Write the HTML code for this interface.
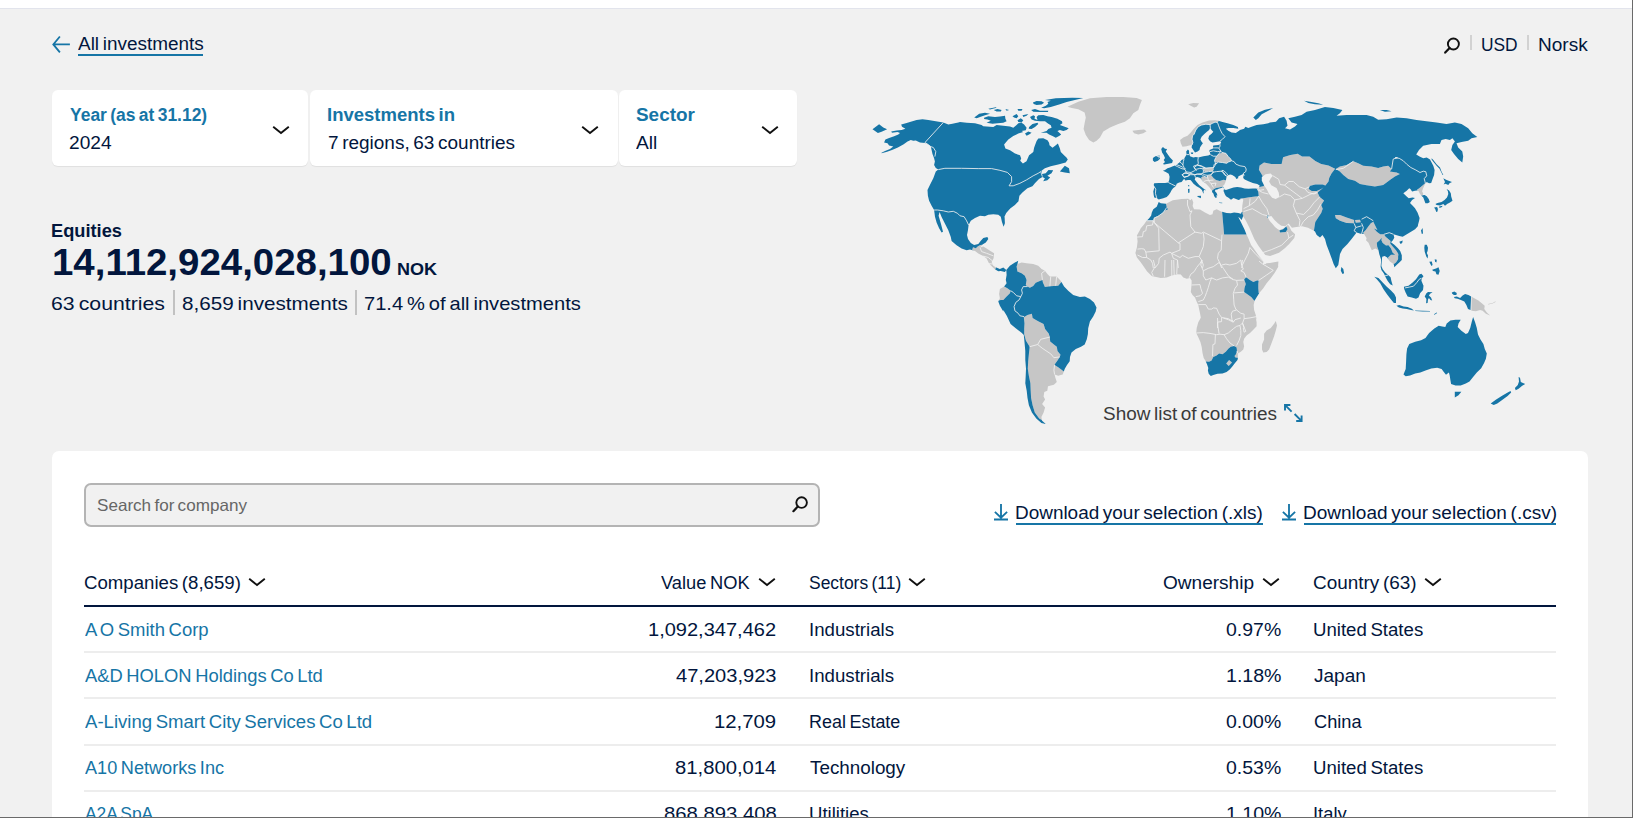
<!DOCTYPE html>
<html><head><meta charset="utf-8">
<style>
*{box-sizing:border-box;margin:0;padding:0}
html,body{width:1633px;height:818px;overflow:hidden;background:#f1f1f1;font-family:"Liberation Sans",sans-serif;color:#02163d}
.a{position:absolute;white-space:nowrap;line-height:1}
.m{position:absolute;white-space:nowrap;line-height:1;transform-origin:0 0;word-spacing:-.085em}
#topbar{position:absolute;left:0;top:0;width:1633px;height:9px;background:#fff;border-bottom:1px solid #e2e4ec}
#redge{position:absolute;left:1632px;top:0;width:1px;height:818px;background:#6a6a6a}
#bedge{position:absolute;left:0;top:817px;width:1633px;height:1px;background:#6a6a6a}
.card{position:absolute;top:90px;height:76px;background:#fff;border-radius:6px;box-shadow:0 1px 1px rgba(0,0,0,.07)}
#panel{position:absolute;left:52px;top:451px;width:1536px;height:380px;background:#fff;border-radius:7px 7px 0 0}
.rl{position:absolute;left:84px;width:1472px;height:2px;background:#ededed}
.ul{position:absolute;height:2px;background:#1675a6}
.sep{position:absolute;width:2px;background:#c4c4c4}
</style></head><body>
<div id="topbar"></div>

<!-- back arrow -->
<svg class="a" style="left:50px;top:34px" width="24" height="22" viewBox="0 0 24 22"><path d="M9.9 2.5 L3.3 10.4 L9.9 18.4 M3.5 10.4 H19.9" fill="none" stroke="#1675a6" stroke-width="1.8"/></svg>
<div class="ul" style="left:78px;top:54px;width:125px"></div>

<!-- top right: search icon + separators -->
<svg class="a" style="left:1441px;top:34px" width="24" height="24" viewBox="0 0 24 24"><circle cx="12.4" cy="10" r="5.5" fill="none" stroke="#111" stroke-width="1.9"/><path d="M8.6 14 L4.2 18.6" stroke="#111" stroke-width="2.2" stroke-linecap="round"/></svg>
<div class="sep" style="left:1470px;top:35px;height:15px;background:#d2d2d2"></div>
<div class="sep" style="left:1527px;top:35px;height:15px;background:#d2d2d2"></div>

<!-- cards -->
<div class="card" style="left:52px;width:256px"></div>
<div class="card" style="left:310px;width:307.5px"></div>
<div class="card" style="left:619px;width:178px"></div>
<svg class="a" style="left:271px;top:124px" width="20" height="12" viewBox="0 0 20 12"><path d="M2.2 2.8 L10 9 L17.8 2.8" fill="none" stroke="#111" stroke-width="1.9"/></svg>
<svg class="a" style="left:580px;top:124px" width="20" height="12" viewBox="0 0 20 12"><path d="M2.2 2.8 L10 9 L17.8 2.8" fill="none" stroke="#111" stroke-width="1.9"/></svg>
<svg class="a" style="left:760px;top:124px" width="20" height="12" viewBox="0 0 20 12"><path d="M2.2 2.8 L10 9 L17.8 2.8" fill="none" stroke="#111" stroke-width="1.9"/></svg>

<!-- stats separators -->
<div class="sep" style="left:173px;top:290px;height:24.5px;background:#c2c2c2"></div>
<div class="sep" style="left:355px;top:290px;height:24.5px;background:#c2c2c2"></div>

<svg class="a" style="left:0;top:0" width="1633" height="450" viewBox="0 0 1633 450">
<path fill-rule="evenodd" d="M1199.1,103.3 1193.2,103.0 1188.2,104.2 1190.7,105.8 1194.1,107.5 1196.6,106.7ZM1133.3,113.3 1138.3,110.0 1139.9,105.0 1141.9,100.0 1136.6,98.0 1123.3,97.0 1106.6,97.0 1090.0,98.3 1078.3,101.7 1067.5,106.7 1071.7,108.0 1078.3,109.2 1084.6,112.5 1085.8,117.5 1084.6,123.3 1083.6,129.1 1085.8,135.0 1089.1,140.0 1093.3,142.5 1096.6,140.8 1100.0,137.5 1103.3,131.6 1110.0,127.5 1118.3,124.1 1124.9,121.7 1129.9,118.3ZM1143.3,133.3 1146.6,131.3 1144.1,129.6 1138.3,130.0 1132.4,130.8 1134.1,133.3 1138.3,134.6ZM1182.5,146.7 1186.6,146.2 1189.1,145.4 1192.0,145.0 1192.9,142.5 1192.0,139.2 1192.5,135.8 1194.1,134.2 1195.8,130.0 1198.3,126.7 1201.6,125.0 1205.8,124.2 1210.0,124.6 1212.5,123.3 1215.0,122.1 1217.5,122.5 1218.7,120.9 1218.3,120.8 1215.0,120.2 1209.1,120.4 1202.5,122.5 1197.5,125.0 1193.3,129.2 1190.8,132.5 1187.5,135.8 1183.3,137.5 1180.1,140.0 1180.8,143.3ZM1218.3,162.1 1222.5,162.5 1226.6,163.3 1228.3,162.1 1231.6,160.8 1230.8,159.2 1228.3,156.7 1225.8,153.3 1222.0,152.5 1217.9,154.6 1215.0,159.2 1214.5,160.8 1215.8,162.5ZM1206.0,167.8 1203.5,168.7 1203.5,170.9 1205.4,171.9 1208.5,171.2 1212.8,170.9 1213.8,169.4 1213.5,167.8 1209.7,167.4ZM1203.8,182.2 1206.0,183.7 1209.1,186.9 1211.0,189.4 1211.9,190.6 1211.9,190.7 1213.5,189.4 1216.0,188.1 1219.1,187.5 1222.5,186.7 1223.1,186.7 1222.2,186.2 1224.1,185.0 1225.3,182.5 1225.9,180.3 1223.5,179.7 1219.7,180.9 1216.0,180.0 1213.5,178.1 1211.0,175.0 1207.2,175.6 1206.6,177.2 1202.2,176.6 1201.2,177.8 1201.7,179.9 1203.5,181.7ZM990.8,251.3 986.6,248.6 983.3,246.6 980.0,247.5 982.4,244.7 980.3,245.0 978.0,246.3 975.8,248.3 973.0,247.3 972.1,250.2 975.0,251.1 978.3,253.6 983.3,256.1 986.6,258.6 989.1,263.6 992.4,267.0 995.1,269.5 996.1,267.4 993.3,265.8 991.6,262.0 993.6,258.3 994.1,253.3ZM1058.2,285.8 1061.4,281.9 1060.7,280.8 1056.6,276.6 1049.9,276.6 1047.4,274.1 1044.9,270.8 1041.6,269.1 1038.2,265.8 1033.2,264.1 1026.6,263.3 1021.6,262.5 1017.4,264.1 1017.6,263.5 1016.6,266.6 1017.4,271.6 1021.6,273.3 1024.9,275.8 1026.6,279.9 1025.8,284.9 1027.4,286.6 1029.9,287.8 1033.2,286.1 1035.7,282.8 1039.9,281.1 1042.4,279.9 1042.9,282.4 1044.9,286.9 1049.9,286.3ZM1199.1,309.1 1200.0,313.3 1200.8,317.5 1200.1,319.1 1198.3,322.2 1196.7,328.0 1196.2,333.0 1198.3,337.2 1200.4,342.1 1201.7,347.1 1202.5,353.0 1203.7,358.0 1205.8,361.3 1205.8,361.4 1209.1,361.7 1211.6,360.5 1213.3,357.1 1216.6,355.5 1219.1,353.4 1222.5,354.2 1225.8,351.7 1228.3,348.8 1230.8,346.7 1234.1,345.9 1236.6,347.6 1237.0,350.9 1235.8,354.6 1234.5,355.9 1235.4,357.6 1237.6,357.8 1237.6,357.8 1237.9,357.8 1237.9,353.4 1240.8,351.7 1243.3,349.6 1244.1,346.3 1243.3,342.1 1244.1,338.8 1246.6,335.5 1250.0,333.0 1253.3,329.7 1256.6,326.3 1256.6,322.2 1255.8,318.0 1256.6,320.0 1255.8,315.0 1254.1,310.0 1253.7,305.0 1254.5,300.9 1251.2,297.1 1247.0,294.1 1244.1,292.1 1244.5,287.9 1245.8,284.1 1244.9,281.6 1244.1,279.6 1246.2,277.3 1249.1,279.6 1253.3,282.1 1257.0,280.4 1258.7,280.4 1258.3,284.1 1258.3,288.3 1258.7,292.9 1259.3,293.0 1263.3,288.3 1266.6,283.3 1270.8,278.3 1274.9,272.5 1278.3,266.7 1278.1,266.3 1278.4,261.6 1272.5,262.6 1266.7,263.3 1262.8,264.6 1263.6,261.6 1259.4,256.6 1255.3,250.8 1251.1,245.0 1248.6,239.1 1246.5,234.6 1224.1,234.6 1222.1,211.8 1221.6,211.7 1216.6,209.2 1213.3,210.8 1212.5,214.2 1210.0,215.0 1205.0,212.5 1200.0,209.6 1194.1,209.2 1192.6,206.1 1193.3,202.5 1191.9,198.8 1190.4,200.3 1188.2,198.8 1181.6,199.1 1172.8,200.3 1166.0,203.7 1166.8,207.5 1168.1,209.2 1165.0,210.6 1162.9,212.7 1160.0,215.2 1156.7,216.4 1154.2,218.1 1152.7,220.6 1146.5,220.8 1144.2,224.2 1140.8,228.3 1139.8,230.3 1136.9,235.5 1137.6,241.3 1136.9,247.2 1135.4,253.1 1136.9,257.5 1140.5,261.9 1143.5,266.3 1147.1,271.4 1151.5,275.8 1152.2,276.2 1155.0,276.7 1160.8,277.9 1166.7,277.5 1171.7,275.4 1177.5,274.2 1180.8,274.6 1183.3,277.5 1186.7,278.7 1190.0,277.9 1191.6,280.4 1191.6,284.1 1191.2,288.3 1190.8,292.1 1192.5,295.0 1195.0,297.5 1196.6,301.6 1198.3,305.0ZM1004.1,286.6 999.9,289.1 999.1,294.1 999.9,298.3 998.8,300.6 1000.8,299.9 1003.3,299.9 1006.6,296.6 1009.9,293.3 1010.8,290.8 1007.4,288.3ZM1041.4,417.1 1043.6,412.6 1045.1,407.5 1042.1,403.9 1045.1,399.5 1043.6,396.5 1044.3,392.1 1047.3,390.7 1048.0,386.3 1053.9,384.8 1056.8,381.9 1055.3,377.5 1054.6,374.5 1058.2,375.7 1062.7,374.5 1063.8,371.6 1061.9,370.1 1058.2,367.2 1054.6,365.0 1055.3,363.5 1057.5,360.6 1059.7,356.9 1060.5,354.7 1057.5,351.1 1056.8,346.7 1053.9,344.5 1050.2,341.5 1049.8,337.1 1048.7,333.5 1045.1,329.1 1043.6,323.9 1037.7,321.0 1032.6,318.1 1031.9,313.7 1027.5,315.1 1023.8,317.3 1024.5,323.2 1024.2,329.1 1024.2,334.2 1026.0,340.8 1029.7,346.7 1028.9,354.0 1028.2,361.3 1027.8,368.7 1028.9,376.0 1030.4,383.3 1030.7,390.7 1031.1,398.0 1032.6,405.3 1034.8,412.6 1039.2,418.5 1042.0,420.2ZM1359.9,184.1 1366.6,185.3 1374.9,186.6 1383.2,184.9 1386.6,182.4 1389.9,179.9 1394.9,176.6 1399.9,174.1 1396.6,172.4 1389.9,171.6 1391.6,169.1 1388.2,165.8 1383.2,166.6 1378.2,167.9 1371.6,166.6 1363.2,165.8 1358.2,163.3 1353.3,161.3 1346.6,164.9 1339.9,166.6 1335.8,169.1 1339.9,171.6 1343.3,174.9 1348.3,179.1 1354.9,180.8ZM1422.5,185.4 1419.2,188.3 1416.7,190.0 1418.7,191.2 1419.6,193.3 1421.2,195.4 1421.4,195.6 1422.7,195.6 1422.7,195.3 1422.5,195.4 1423.3,193.7 1422.1,191.2 1422.9,188.7 1424.2,185.8 1425.4,183.3 1425.6,183.2 1425.4,182.9ZM1335.1,168.8 1328.5,165.4 1321.2,163.9 1315.3,161.0 1309.5,156.6 1302.1,156.6 1297.7,153.7 1290.4,155.1 1283.1,157.3 1281.6,163.9 1271.3,163.9 1264.0,162.5 1259.6,165.4 1258.9,169.8 1262.5,175.7 1262.6,176.4 1265.5,174.2 1270.6,173.5 1272.8,175.7 1270.6,178.6 1269.1,181.5 1271.3,185.2 1276.5,188.1 1278.7,192.5 1279.4,196.9 1275.7,199.1 1272.1,197.7 1269.1,194.0 1266.9,189.6 1264.0,185.2 1263.8,184.9 1264.0,185.9 1259.6,187.0 1259.3,186.8 1259.1,187.5 1256.6,188.4 1256.3,188.4 1257.4,189.6 1258.4,192.5 1258.7,196.2 1255.2,196.6 1249.3,197.2 1243.5,198.2 1240.5,198.4 1240.2,199.2 1242.2,198.4 1243.2,199.4 1243.2,199.9 1242.3,205.7 1242.0,211.6 1241.8,212.1 1242.6,212.1 1242.5,213.7 1243.3,215.8 1243.1,216.2 1245.9,220.8 1249.3,227.5 1251.8,233.3 1254.3,239.1 1258.4,245.8 1262.6,251.6 1265.3,255.0 1270.2,255.9 1279.0,252.7 1284.8,248.2 1289.2,243.9 1294.3,238.0 1295.1,234.3 1291.4,230.7 1289.2,226.3 1287.8,224.8 1286.3,226.3 1283.1,228.8 1279.4,229.9 1277.5,228.9 1275.0,227.0 1272.5,224.1 1269.6,220.7 1268.1,218.0 1267.1,217.5 1267.2,215.4 1269.3,216.0 1269.2,216.1 1271.3,216.0 1274.5,220.1 1277.9,223.3 1281.3,225.7 1285.3,226.3 1288.6,223.6 1291.9,227.7 1296.3,227.0 1302.1,226.3 1308.0,227.7 1313.9,230.7 1314.6,226.3 1315.3,221.9 1318.2,217.5 1321.2,213.1 1322.7,208.7 1321.2,205.0 1324.1,200.6 1319.7,196.9 1317.5,192.5 1321.2,189.6 1323.6,187.2 1321.2,188.9 1316.8,191.1 1311.7,191.1 1308.7,188.9 1309.5,185.9 1315.3,184.5 1322.7,184.5 1325.3,185.4 1325.6,185.2 1328.5,181.5 1329.2,177.9 1331.5,173.5ZM1287.5,229.2 1285.7,232.1 1280.1,232.4 1279.4,230.4 1283.1,229.2 1286.3,226.6ZM1354.1,220.0 1346.6,217.5 1340.0,215.0 1335.0,215.0 1335.8,218.3 1340.0,220.8 1346.6,223.0 1354.1,223.3ZM1355.8,222.8 1360.8,222.2 1360.0,219.7 1355.0,220.0ZM1391.0,248.5 1392.7,252.7 1395.2,254.7 1398.5,255.6 1398.1,253.5 1396.0,250.2 1392.7,246.4 1390.2,243.5 1390.6,241.0 1387.7,238.5 1385.6,236.8 1383.9,234.3 1380.2,234.3 1376.8,231.8 1373.9,228.5 1377.4,230.0 1374.9,225.0 1373.3,221.7 1370.8,223.3 1368.3,226.6 1365.8,230.0 1363.3,232.5 1363.6,234.1 1364.1,234.1 1366.6,238.3 1366.0,240.2 1368.5,242.7 1370.2,246.8 1371.8,250.2 1375.2,248.5 1378.5,250.2 1377.2,246.8 1376.8,242.7 1379.7,240.2 1381.8,237.7 1381.4,240.2 1382.7,243.1 1386.0,245.6 1388.5,245.2ZM1391.0,254.7 1388.1,257.6 1388.3,259.3 1388.5,259.7 1390.2,261.8 1393.5,263.9 1393.6,264.2 1396.0,262.6 1398.1,259.3 1398.1,255.6 1395.2,254.7ZM1488.3,304.6 1492.6,303.6 1495.5,301.9 1495.5,301.2 1492.6,302.9 1488.0,304.0ZM1482.6,310.8 1485.9,313.7 1490.1,315.6 1486.8,312.5 1484.3,309.1 1484.7,305.8 1481.8,303.3 1478.4,300.4 1474.3,298.3 1471.6,296.8 1471.4,310.8 1475.9,311.2 1480.1,310.0ZM1264.1,339.6 1262.0,344.6 1262.0,349.6 1263.3,352.6 1266.6,352.1 1269.1,349.6 1271.6,343.0 1274.1,336.3 1275.8,330.5 1277.0,325.5 1275.8,320.9 1274.1,323.8 1270.8,328.0 1266.6,330.5 1264.1,333.8ZM1232.0,362.6 1229.1,360.1 1226.2,363.4 1228.7,366.1Z" fill="#c6c6c6"/>
<path fill-rule="evenodd" d="M1083.3,98.0 1072.4,97.7 1055.8,98.2 1045.0,99.9 1050.8,100.7 1047.5,102.0 1048.3,103.7 1045.8,105.7 1041.2,107.8 1044.1,108.2 1050.8,107.0 1059.1,104.5 1066.6,102.0 1074.9,99.9ZM1041.6,101.3 1036.6,101.0 1032.9,102.4 1033.7,104.1 1036.6,104.9 1041.6,104.5 1044.1,102.8ZM988.3,108.7 990.0,109.5 996.6,107.8 995.8,107.2ZM1009.1,109.9 1005.4,109.1 1006.6,110.7ZM1017.5,109.1 1018.3,110.7 1021.6,110.7 1022.5,109.1ZM1000.8,111.6 1001.6,109.9 997.5,109.1 993.7,109.9 996.6,111.6ZM1048.3,110.7 1040.0,110.7 1035.0,109.1 1031.2,109.9 1033.3,111.8 1040.0,112.0 1047.9,112.0ZM985.0,112.8 979.2,113.7 974.2,117.4 976.7,118.2 980.0,117.0 985.0,115.3 990.0,113.8ZM1022.5,115.3 1023.3,117.0 1026.6,115.7 1028.3,114.1ZM1014.1,117.4 1016.6,118.2 1018.3,116.2 1016.6,114.1 1012.5,116.2ZM995.0,117.0 988.3,116.2 984.1,117.8 984.1,119.1 987.5,119.5 990.8,120.7 986.6,122.8 992.5,123.7 997.5,123.2 1003.3,122.8 1006.6,121.2 1005.4,118.7 1005.0,115.7 1000.0,116.6ZM1021.6,122.4 1023.3,120.3 1020.8,118.2 1017.5,120.3 1018.3,122.0ZM1038.3,124.1 1037.5,122.8 1032.5,124.1 1029.1,127.0 1028.7,128.7 1031.6,129.1 1035.0,127.0ZM1049.1,134.5 1052.5,136.1 1055.8,137.8 1059.1,136.1 1061.2,134.5 1057.4,131.1 1059.9,129.9 1063.3,131.1 1066.6,129.9 1068.7,128.2 1064.1,126.6 1059.9,124.9 1062.4,123.2 1062.0,121.2 1057.4,118.7 1051.6,117.0 1047.5,116.2 1043.3,114.9 1038.3,115.3 1036.6,117.0 1037.5,119.9 1034.5,118.7 1035.0,116.2 1033.3,115.3 1030.0,117.0 1031.6,119.5 1035.0,120.7 1040.0,121.2 1045.0,121.2 1048.3,123.7 1050.8,125.3 1051.6,127.8 1048.3,129.1 1046.6,131.1 1040.8,132.8 1046.6,132.8ZM872.5,129.2 877.9,132.9 881.6,131.7 887.1,129.2 883.3,127.5 879.1,124.2ZM1026.6,135.7 1029.1,134.5 1031.6,132.8 1028.3,131.6 1025.0,133.6ZM1167.5,154.1 1165.8,151.6 1167.1,149.1 1165.0,148.7 1162.9,147.1 1161.2,149.1 1162.1,152.5 1163.7,155.0 1165.0,157.9 1163.7,160.0 1165.0,162.1 1162.9,164.1 1164.2,164.6 1168.3,163.7 1172.1,162.9 1172.9,160.4 1170.0,157.5ZM1159.6,155.4 1155.4,156.2 1152.9,157.9 1152.9,160.4 1154.6,162.1 1157.9,160.8 1160.0,158.7ZM1069.8,173.3 1069.0,168.3 1064.8,165.8 1059.9,171.6 1064.8,172.4ZM978.3,244.1 974.1,245.0 970.8,243.0 968.0,239.1 967.0,235.0 968.0,230.0 968.6,225.0 970.8,220.8 975.0,218.0 980.0,215.8 984.9,216.3 988.3,214.7 993.3,214.2 998.3,214.7 1000.8,216.7 1001.9,221.7 1003.6,226.7 1004.9,223.3 1004.6,216.7 1004.1,217.4 1006.2,212.9 1010.2,208.6 1014.9,204.9 1018.5,201.3 1019.4,195.8 1022.4,192.4 1027.4,188.3 1032.4,186.3 1034.9,183.3 1039.0,179.1 1042.4,176.9 1044.9,178.3 1043.2,181.3 1047.4,180.3 1050.2,177.4 1047.4,175.8 1051.5,173.3 1053.2,170.3 1048.5,169.9 1045.7,173.3 1042.0,174.1 1041.5,170.8 1044.9,168.3 1050.7,166.3 1058.2,164.4 1065.7,162.4 1067.8,159.6 1065.7,156.6 1065.8,157.0 1060.8,152.0 1059.9,148.6 1057.9,143.6 1055.8,145.3 1052.5,147.8 1049.5,145.3 1049.1,142.8 1047.5,140.3 1043.3,138.2 1038.3,138.6 1036.6,141.1 1035.0,145.3 1034.1,147.8 1033.3,152.0 1029.1,155.3 1026.5,161.3 1022.9,163.6 1020.2,160.8 1021.2,158.6 1020.0,155.3 1015.0,153.6 1010.0,150.3 1005.4,148.6 1004.1,144.5 1008.3,139.5 1013.3,136.1 1018.3,133.6 1023.3,132.0 1021.6,131.1 1025.8,130.3 1026.6,127.8 1024.1,124.5 1021.6,122.8 1018.3,123.2 1016.6,124.9 1013.3,127.8 1010.0,126.6 1003.3,125.7 996.6,124.9 993.3,127.0 983.3,126.2 981.6,124.9 975.0,123.2 966.7,122.8 960.0,122.0 958.3,122.5 952.4,123.7 948.3,124.6 943.3,122.5 935.8,121.2 928.3,120.0 922.5,119.3 916.6,120.0 910.8,121.7 905.8,123.3 901.2,124.6 902.0,126.7 905.4,128.7 901.6,130.0 896.6,130.4 891.2,131.5 892.0,132.7 897.5,132.1 900.0,132.9 898.3,134.6 894.1,136.2 889.1,137.9 885.4,139.6 884.1,142.5 887.5,143.3 889.1,145.4 893.3,146.6 890.0,149.1 885.0,151.1 881.5,152.8 881.6,153.3 887.1,151.7 892.0,150.1 897.9,147.6 903.7,144.3 907.5,141.6 910.8,140.0 913.3,140.8 915.8,140.6 920.0,142.5 925.0,142.9 927.5,144.1 930.8,146.6 931.6,150.0 932.5,154.1 934.1,158.3 934.9,161.6 934.1,165.0 935.8,168.0 938.3,169.6 935.8,171.6 933.3,178.3 929.9,184.9 927.5,189.9 927.9,195.8 929.1,200.8 931.6,205.8 934.1,210.0 935.0,216.7 936.6,222.5 939.1,228.3 941.6,232.5 943.0,231.7 940.8,223.3 938.6,215.8 939.6,212.0 941.6,217.0 945.0,223.7 948.3,230.3 950.8,237.0 951.6,241.1 956.6,245.3 961.6,248.6 966.6,250.3 970.0,249.5 975.0,251.1 972.1,250.2 973.0,247.3 975.8,248.3 978.0,246.3 980.3,245.0 982.4,244.7 982.5,244.6 985.8,242.5 988.3,239.1 987.4,237.0 983.3,238.0 980.8,240.8ZM1166.8,207.5 1166.0,203.7 1165.8,203.8 1160.8,203.3 1158.7,202.1 1156.7,206.7 1153.3,209.2 1151.8,212.5 1151.2,215.4 1149.2,218.3 1146.7,220.7 1146.5,220.8 1152.7,220.6 1154.2,218.1 1156.7,216.4 1160.0,215.2 1162.9,212.7 1165.0,210.6 1168.1,209.2ZM999.9,269.1 996.3,267.5 996.1,267.4 995.1,269.5 995.3,269.6 998.3,271.3 1000.8,271.1 1004.9,271.9 1006.3,269.9 1003.3,267.5ZM1009.9,293.3 1006.6,296.6 1003.3,299.9 1000.8,299.9 998.8,300.6 998.3,301.6 999.9,305.8 1003.3,311.6 1003.3,310.0 1006.9,315.9 1010.6,323.9 1015.7,328.3 1021.6,332.7 1023.8,334.9 1024.5,342.3 1025.3,351.1 1025.3,359.9 1026.0,368.7 1025.7,376.0 1025.3,383.3 1026.7,390.7 1027.5,398.0 1028.9,405.3 1031.9,412.6 1036.3,418.5 1041.4,422.9 1045.8,424.1 1042.1,420.7 1041.4,417.1 1042.0,420.2 1039.2,418.5 1034.8,412.6 1032.6,405.3 1031.1,398.0 1030.7,390.7 1030.4,383.3 1028.9,376.0 1027.8,368.7 1028.2,361.3 1028.9,354.0 1029.7,346.7 1026.0,340.8 1024.2,334.2 1024.2,329.1 1024.5,323.2 1023.8,317.3 1027.5,315.1 1031.9,313.7 1032.6,318.1 1037.7,321.0 1043.6,323.9 1045.1,329.1 1048.7,333.5 1049.8,337.1 1050.2,341.5 1053.9,344.5 1056.8,346.7 1057.5,351.1 1060.5,354.7 1059.7,356.9 1057.5,360.6 1055.3,363.5 1054.6,365.0 1058.2,367.2 1061.9,370.1 1063.8,371.6 1064.8,368.7 1067.0,365.0 1069.7,361.3 1070.0,356.9 1071.5,352.5 1075.8,348.9 1081.0,346.7 1084.7,344.5 1086.8,339.3 1087.9,334.0 1088.2,328.2 1089.9,321.6 1093.2,316.6 1095.7,311.6 1096.5,307.4 1094.0,302.4 1089.9,299.1 1084.9,296.6 1079.9,296.9 1073.2,294.9 1068.2,290.8 1064.1,286.6 1060.7,280.8 1061.4,281.9 1058.2,285.8 1049.9,286.3 1044.9,286.9 1042.9,282.4 1042.4,279.9 1039.9,281.1 1035.7,282.8 1033.2,286.1 1029.9,287.8 1027.4,286.6 1025.8,284.9 1026.6,279.9 1024.9,275.8 1021.6,273.3 1017.4,271.6 1016.6,266.6 1017.6,263.5 1018.2,260.8 1014.9,262.5 1009.9,265.8 1006.3,269.9 1006.6,274.9 1005.8,279.9 1006.6,283.3 1004.1,286.6 1007.4,288.3 1010.8,290.8ZM1304.1,100.8 1308.3,103.0 1315.0,104.2 1323.3,104.7 1318.3,103.3 1310.0,101.7ZM1386.6,110.0 1379.9,110.0 1384.9,111.7 1391.6,111.3ZM1268.3,110.8 1273.3,108.0 1265.0,109.7 1258.3,112.5 1253.3,117.5 1255.8,120.0 1258.3,118.3 1261.7,114.2ZM1190.8,152.5 1191.0,153.7 1192.9,154.0 1193.3,152.6ZM1188.2,184.9 1188.3,186.2 1189.2,186.4 1189.2,184.9ZM1200.4,139.6 1201.6,136.7 1204.1,134.2 1206.6,132.1 1209.1,130.0 1210.0,127.9 1210.4,127.9 1211.6,130.0 1213.3,131.7 1211.6,133.7 1209.1,135.8 1208.3,138.7 1210.0,141.2 1212.5,142.5 1215.8,142.1 1220.0,141.2 1221.2,142.5 1220.0,144.2 1218.3,145.0 1213.3,145.4 1212.9,147.1 1214.1,147.9 1212.5,148.7 1209.5,150.0 1209.5,151.6 1210.0,152.5 1210.4,154.6 1208.3,155.4 1203.3,156.2 1198.3,157.5 1195.8,157.1 1193.3,157.5 1190.0,156.2 1189.1,153.3 1189.1,150.8 1187.9,149.6 1186.2,151.6 1186.6,154.6 1185.4,156.6 1184.1,158.7 1181.6,160.0 1180.0,162.1 1177.5,164.1 1175.0,165.4 1172.9,166.2 1170.0,167.5 1167.5,168.3 1165.0,170.0 1162.9,170.8 1162.9,170.8 1165.8,172.1 1168.7,173.7 1169.6,176.7 1169.2,180.0 1168.3,182.5 1165.0,182.9 1159.2,182.9 1154.2,183.3 1153.7,185.0 1154.6,186.7 1153.3,191.6 1153.7,195.0 1154.2,197.5 1156.7,197.9 1158.7,199.6 1160.4,199.1 1163.3,198.3 1166.7,197.1 1168.7,195.0 1170.4,192.5 1171.7,190.0 1173.3,187.9 1175.8,186.2 1176.7,183.7 1179.1,182.5 1181.6,182.1 1184.1,178.7 1185.4,180.6 1187.9,180.0 1190.4,180.0 1191.6,181.2 1193.5,183.7 1196.6,186.2 1199.7,188.1 1201.9,190.0 1202.9,192.5 1203.8,193.7 1203.5,191.2 1204.1,190.0 1206.6,190.3 1204.7,189.4 1202.2,187.5 1199.1,185.0 1196.6,181.9 1194.7,179.4 1195.4,177.5 1197.2,176.9 1200.4,178.1 1202.2,180.6 1202.9,181.6 1206.0,183.7 1203.8,182.2 1203.5,181.7 1201.7,179.9 1201.2,177.8 1202.2,176.6 1206.6,177.2 1207.2,175.6 1211.0,175.0 1213.5,178.1 1216.0,180.0 1219.7,180.9 1223.5,179.7 1225.9,180.3 1225.3,182.5 1226.0,180.0 1226.6,176.6 1227.8,175.3 1230.3,174.4 1232.2,175.0 1235.3,176.9 1236.3,179.1 1238.5,178.1 1237.8,176.9 1239.1,175.9 1241.6,174.7 1244.1,173.4 1243.5,175.6 1243.2,178.1 1244.7,179.4 1248.5,181.2 1252.8,183.1 1257.2,184.1 1259.7,185.6 1259.1,187.5 1259.3,186.8 1259.6,187.0 1264.0,185.9 1263.8,184.9 1264.0,185.2 1261.8,180.8 1261.8,177.1 1265.5,174.2 1262.6,176.4 1262.5,175.7 1258.9,169.8 1259.6,165.4 1264.0,162.5 1271.3,163.9 1281.6,163.9 1283.1,157.3 1290.4,155.1 1297.7,153.7 1302.1,156.6 1309.5,156.6 1315.3,161.0 1321.2,163.9 1328.5,165.4 1335.1,168.8 1331.5,173.5 1329.2,177.9 1328.5,181.5 1325.6,185.2 1325.3,185.4 1322.7,184.5 1315.3,184.5 1309.5,185.9 1308.7,188.9 1311.7,191.1 1316.8,191.1 1321.2,188.9 1323.6,187.2 1321.2,189.6 1317.5,192.5 1319.7,196.9 1324.1,200.6 1321.2,205.0 1322.7,208.7 1321.2,213.1 1318.2,217.5 1315.3,221.9 1314.6,226.3 1313.9,230.7 1315.0,231.6 1316.7,235.0 1320.0,237.5 1322.5,235.0 1325.0,239.1 1326.6,245.0 1329.1,251.6 1331.6,258.3 1333.6,264.1 1335.8,268.3 1338.3,264.9 1339.1,259.9 1340.0,254.1 1342.5,249.1 1347.5,244.1 1351.6,239.1 1354.1,235.8 1356.6,232.5 1361.6,234.1 1363.6,234.1 1363.3,232.5 1365.8,230.0 1368.3,226.6 1370.8,223.3 1373.3,221.7 1374.9,225.0 1377.4,230.0 1373.9,228.5 1376.8,231.8 1380.2,234.3 1383.9,234.3 1385.6,236.8 1387.7,238.5 1390.6,241.0 1390.2,243.5 1392.7,246.4 1396.0,250.2 1398.1,253.5 1398.5,255.6 1395.2,254.7 1398.1,255.6 1398.1,259.3 1396.0,262.6 1393.6,264.2 1393.9,265.1 1394.3,267.2 1396.8,264.7 1399.3,262.6 1401.8,260.1 1401.8,255.2 1400.2,251.0 1397.7,248.1 1394.3,244.7 1391.0,242.2 1392.7,240.6 1394.3,237.7 1393.5,234.3 1399.3,236.0 1402.7,236.8 1406.0,234.7 1411.0,231.8 1415.1,229.3 1418.0,226.0 1417.9,225.3 1419.1,220.8 1419.6,218.0 1417.5,212.5 1415.0,208.3 1412.5,205.4 1410.0,202.9 1412.1,200.0 1415.0,197.9 1412.5,197.5 1408.7,198.3 1406.7,196.6 1403.3,193.3 1406.7,190.8 1409.2,188.3 1410.4,189.1 1412.1,191.6 1415.0,190.8 1417.1,190.4 1418.7,191.2 1416.7,190.0 1419.2,188.3 1422.5,185.4 1425.4,182.9 1425.6,183.2 1426.7,182.1 1429.1,183.3 1431.2,182.9 1432.5,179.2 1434.1,175.0 1434.6,170.0 1433.3,165.8 1431.6,162.5 1430.0,159.6 1426.7,157.5 1423.3,158.3 1420.0,156.7 1416.2,154.6 1419.0,150.0 1423.2,145.8 1431.5,144.1 1439.9,144.1 1441.5,140.0 1445.7,139.1 1449.9,140.0 1452.4,138.3 1454.9,141.6 1452.4,145.0 1451.2,150.0 1454.0,154.1 1458.2,159.1 1462.3,162.4 1463.2,156.6 1462.3,151.6 1458.2,147.5 1456.5,143.3 1461.5,142.0 1468.2,140.8 1471.5,138.3 1477.3,137.1 1472.3,133.3 1468.2,128.3 1461.5,124.1 1454.9,122.5 1446.5,124.1 1436.5,122.5 1426.5,121.3 1416.5,120.0 1406.6,118.3 1396.6,117.5 1386.6,119.2 1378.2,119.7 1373.2,116.7 1366.6,115.0 1356.6,115.0 1346.6,115.0 1336.6,115.8 1339.9,113.3 1342.4,110.0 1333.3,108.0 1324.9,107.0 1315.0,110.0 1306.6,111.7 1301.6,115.0 1295.0,116.7 1288.3,118.3 1291.6,122.5 1297.5,124.1 1295.0,126.6 1290.0,129.6 1285.0,128.3 1287.5,125.8 1286.6,120.8 1284.1,116.7 1279.1,118.3 1276.0,121.7 1269.9,122.5 1268.3,123.3 1263.3,124.2 1256.6,125.0 1251.6,126.7 1248.3,127.9 1245.4,126.7 1244.1,128.7 1239.9,130.0 1239.1,130.8 1235.8,132.9 1231.6,132.5 1228.3,130.8 1225.8,128.7 1228.3,127.9 1233.3,127.9 1238.3,128.7 1237.9,127.1 1233.3,125.0 1227.5,123.3 1222.5,122.1 1218.3,120.8 1218.7,120.9 1217.5,122.5 1215.0,122.1 1212.5,123.3 1210.0,124.6 1205.8,124.2 1201.6,125.0 1198.3,126.7 1195.8,130.0 1194.1,134.2 1192.5,135.8 1192.0,139.2 1192.9,142.5 1192.0,145.0 1191.6,147.5 1193.3,150.0 1195.0,152.5 1197.5,151.6 1199.5,150.0 1200.0,147.5 1201.6,145.0 1202.9,143.3 1201.6,141.7ZM1226.6,163.3 1222.5,162.5 1218.3,162.1 1215.8,162.5 1214.5,160.8 1215.0,159.2 1217.9,154.6 1222.0,152.5 1225.8,153.3 1228.3,156.7 1230.8,159.2 1231.6,160.8 1228.3,162.1ZM1213.8,169.4 1212.8,170.9 1208.5,171.2 1205.4,171.9 1203.5,170.9 1203.5,168.7 1206.0,167.8 1209.7,167.4 1213.5,167.8ZM1354.1,220.0 1354.1,223.3 1346.6,223.0 1340.0,220.8 1335.8,218.3 1335.0,215.0 1340.0,215.0 1346.6,217.5ZM1374.9,186.6 1366.6,185.3 1359.9,184.1 1354.9,180.8 1348.3,179.1 1343.3,174.9 1339.9,171.6 1335.8,169.1 1339.9,166.6 1346.6,164.9 1353.3,161.3 1358.2,163.3 1363.2,165.8 1371.6,166.6 1378.2,167.9 1383.2,166.6 1388.2,165.8 1391.6,169.1 1389.9,171.6 1396.6,172.4 1399.9,174.1 1394.9,176.6 1389.9,179.9 1386.6,182.4 1383.2,184.9ZM1355.8,222.8 1355.0,220.0 1360.0,219.7 1360.8,222.2ZM1188.0,189.0 1188.2,192.9 1189.5,192.5 1189.5,188.7ZM1215.3,189.7 1217.2,189.4 1219.1,188.4 1219.7,188.4 1222.5,187.5 1224.0,188.4 1223.5,186.9 1223.1,186.7 1222.5,186.7 1219.1,187.5 1216.0,188.1 1213.5,189.4 1211.9,190.7 1211.9,190.6 1212.2,192.2 1213.5,193.7 1214.1,195.9 1215.3,197.8 1216.9,197.5 1216.3,195.3 1217.5,195.6 1216.6,193.1 1215.0,191.2ZM1223.5,190.9 1224.1,192.2 1224.7,194.0 1226.0,196.2 1228.5,197.8 1231.0,199.7 1233.5,198.1 1236.0,199.0 1238.5,200.0 1242.2,198.4 1240.2,199.2 1240.5,198.4 1243.5,198.2 1249.3,197.2 1255.2,196.6 1258.7,196.2 1258.4,192.5 1257.4,189.6 1256.3,188.4 1252.8,188.4 1248.5,188.7 1244.7,188.4 1241.0,187.5 1237.2,186.9 1233.5,187.5 1229.7,188.7 1226.0,190.0 1224.4,189.4 1224.1,188.5ZM1196.9,196.1 1198.5,197.3 1200.9,198.2 1201.0,195.7ZM1219.1,202.5 1219.2,203.1 1222.2,203.2 1222.3,202.7ZM1238.3,212.9 1234.1,212.5 1230.8,213.3 1226.6,212.9 1222.1,211.8 1224.1,234.6 1246.5,234.6 1244.4,229.2 1241.1,222.5 1238.3,217.1 1239.9,217.9 1241.6,220.0 1243.3,215.8 1242.5,213.7 1242.6,212.1 1241.8,212.1 1242.0,211.6 1241.3,213.1 1241.3,213.2 1240.8,213.7ZM1269.2,216.1 1269.3,216.0 1267.2,215.4 1267.1,217.5 1268.1,218.0 1267.2,216.3 1271.3,216.0ZM1279.4,230.4 1280.1,232.4 1285.7,232.1 1287.5,229.2 1286.3,226.6 1283.1,229.2ZM1402.7,240.6 1399.3,241.8 1400.6,243.9 1402.2,243.1ZM1391.4,281.0 1390.6,277.2 1388.1,275.1 1385.2,272.6 1382.7,269.3 1381.4,266.0 1381.8,261.0 1382.2,256.8 1384.7,256.0 1387.2,257.6 1388.3,259.3 1388.1,257.6 1391.0,254.7 1395.2,254.7 1392.7,252.7 1391.0,248.5 1388.5,245.2 1386.0,245.6 1382.7,243.1 1381.4,240.2 1381.8,237.7 1379.7,240.2 1376.8,242.7 1377.2,246.8 1378.5,250.2 1379.3,254.3 1381.0,259.3 1381.0,262.6 1380.6,266.8 1381.4,270.1 1383.9,273.5 1386.0,278.1 1387.7,281.0 1390.2,284.3 1392.7,285.6ZM1342.5,274.1 1344.1,273.3 1343.3,269.1 1341.3,266.9 1340.8,270.8ZM1259.3,293.0 1258.7,292.9 1258.3,288.3 1258.3,284.1 1258.7,280.4 1257.0,280.4 1253.3,282.1 1249.1,279.6 1246.2,277.3 1244.1,279.6 1244.9,281.6 1245.8,284.1 1244.5,287.9 1244.1,292.1 1247.0,294.1 1251.2,297.1 1254.5,300.9 1254.5,300.8 1259.1,293.3ZM1386.8,286.7 1382.7,282.5 1378.5,277.9 1374.3,276.7 1376.8,279.2 1380.2,283.3 1383.5,289.2 1386.8,294.1 1390.6,299.1 1393.9,302.9 1396.0,302.9 1396.0,297.5 1394.3,294.1 1391.0,290.4ZM1402.7,308.5 1406.8,309.1 1411.0,310.1 1413.9,310.4 1411.8,308.7 1407.6,307.1 1403.5,306.6 1399.3,305.0 1396.4,305.8 1398.9,307.5ZM1225.8,351.7 1222.5,354.2 1219.1,353.4 1216.6,355.5 1213.3,357.1 1211.6,360.5 1209.1,361.7 1205.8,361.4 1207.1,364.6 1208.3,368.0 1207.9,370.5 1208.7,373.8 1210.8,375.9 1213.3,375.1 1217.5,373.8 1222.5,373.4 1226.6,372.1 1230.0,369.2 1232.5,366.3 1235.0,363.0 1237.5,360.1 1237.9,358.0 1237.9,357.8 1237.6,357.8 1237.6,357.8 1235.4,357.6 1234.5,355.9 1235.8,354.6 1237.0,350.9 1236.6,347.6 1234.1,345.9 1230.8,346.7 1228.3,348.8ZM1232.0,362.6 1228.7,366.1 1226.2,363.4 1229.1,360.1ZM1431.6,159.6 1433.3,161.7 1436.6,165.8 1439.5,168.7 1442.6,175.0 1443.3,175.0 1441.6,171.7 1440.0,167.5 1436.6,164.2 1433.3,160.0 1431.6,158.3ZM1448.3,185.0 1449.5,183.3 1452.0,182.1 1446.6,180.0 1443.3,178.3 1445.0,182.1 1443.7,184.6 1445.4,183.7ZM1450.0,202.5 1452.5,200.8 1451.2,196.6 1450.8,193.3 1449.1,190.4 1446.6,189.1 1447.9,191.2 1448.3,194.1 1447.0,197.5 1444.5,200.0 1441.6,202.1 1437.5,202.9 1435.4,204.1 1436.6,205.0 1440.0,205.4 1443.3,204.1 1445.0,205.8 1447.5,203.7ZM1421.4,195.6 1421.2,195.4 1423.3,197.5 1424.2,200.0 1425.4,203.3 1427.9,203.3 1429.8,202.1 1428.7,199.1 1426.7,196.2 1424.6,195.0 1422.7,195.3 1422.7,195.6ZM1439.1,206.6 1439.5,207.9 1442.0,207.1 1442.5,205.8ZM1437.1,207.1 1434.1,207.5 1435.4,209.6 1436.2,212.1 1437.5,211.6 1437.9,209.1ZM1421.0,230.6 1421.8,233.9 1423.0,233.5 1422.6,228.1ZM1424.7,251.8 1426.4,256.8 1427.6,258.5 1428.0,255.6 1426.8,253.1 1427.6,251.0 1428.0,247.7 1426.8,244.7 1424.7,244.7 1424.3,247.7ZM1434.7,259.3 1435.1,261.8 1436.4,262.6 1436.8,259.7ZM1431.8,261.4 1429.3,261.8 1431.4,266.0 1432.6,265.1ZM1438.5,274.7 1439.7,271.0 1438.5,267.2 1436.0,268.5 1432.2,269.7 1433.0,271.0 1435.5,271.4 1436.4,274.3ZM1423.5,276.2 1421.4,273.8 1419.3,274.6 1416.0,279.2 1412.6,282.5 1408.5,285.8 1403.9,286.7 1404.3,289.2 1405.6,292.5 1407.6,296.6 1411.8,297.5 1416.0,298.7 1418.5,297.5 1420.1,293.3 1423.0,290.0 1423.5,285.8 1421.4,280.8 1421.8,278.3ZM1451.8,292.5 1452.2,293.7 1453.9,295.0 1456.4,295.0 1456.8,292.9 1454.3,291.6ZM1432.6,292.3 1428.0,292.1 1426.4,293.3 1424.7,296.6 1426.4,299.1 1426.1,303.3 1427.6,302.9 1428.0,299.6 1428.9,297.9 1430.5,300.0 1432.2,300.4 1431.0,297.5 1428.9,295.4 1430.1,293.7ZM1460.1,297.9 1456.8,296.6 1453.9,297.1 1454.7,298.3 1457.6,298.7 1460.9,300.0 1464.3,301.6 1466.4,305.0 1468.0,309.1 1470.5,310.0 1471.1,296.6 1468.4,295.0 1465.1,294.1 1462.6,295.4ZM1415.1,310.6 1415.3,311.1 1422.6,311.4 1430.0,311.6 1430.1,311.1 1422.6,310.8ZM1433.9,314.3 1434.5,314.8 1437.2,313.0 1436.8,312.5ZM1449.7,375.5 1450.4,379.9 1451.1,383.9 1455.5,385.4 1460.7,385.4 1465.8,383.6 1469.5,381.4 1473.1,377.0 1476.8,372.6 1481.2,368.2 1484.1,363.1 1485.9,358.7 1486.8,353.5 1484.8,349.1 1483.4,344.0 1480.5,339.6 1478.0,334.5 1476.8,327.9 1475.0,322.0 1473.1,316.9 1471.7,322.0 1470.2,327.9 1468.0,333.0 1465.8,334.0 1461.4,330.8 1457.7,327.1 1458.5,323.5 1460.7,319.8 1455.5,319.8 1450.4,320.5 1446.7,323.5 1445.3,327.1 1442.3,326.4 1438.7,325.7 1434.3,328.6 1429.1,333.0 1425.5,338.1 1421.1,340.3 1415.2,341.8 1409.3,344.0 1407.1,348.4 1406.4,354.3 1406.1,361.6 1405.7,368.9 1403.5,374.5 1405.7,376.3 1410.1,375.5 1415.2,373.6 1420.3,372.6 1425.5,370.4 1431.3,368.6 1437.2,367.8 1441.6,368.9 1443.8,371.9 1446.0,374.8 1448.9,372.6ZM1517.8,385.1 1514.9,388.0 1515.7,390.2 1518.6,388.7 1522.2,385.8 1525.2,383.9 1520.8,382.1 1520.0,377.7 1518.6,377.0 1519.0,381.4ZM1454.8,397.5 1458.5,395.3 1461.4,391.7 1454.8,391.7ZM1502.5,399.7 1507.6,396.1 1511.2,392.4 1510.5,390.9 1506.8,393.1 1501.7,396.1 1495.8,399.7 1490.7,403.4 1493.7,404.9 1497.3,403.4Z" fill="#1675a6"/>
<path d="M968.6,225.0 966.6,220.8 964.1,216.7 960.0,215.8 957.5,213.3 953.3,211.3 948.3,212.0 943.3,210.8 937.5,210.0 934.1,210.0M938.3,169.6 944.9,168.3 961.6,168.3 978.2,168.6 991.6,168.6 999.9,170.3 1007.4,172.4 1011.6,176.6 1011.6,181.6 1009.1,185.8 1013.2,185.8 1019.9,183.3 1026.5,179.9 1033.2,175.8 1038.2,173.3 1040.7,171.6 1042.4,176.6M943.3,122.5 925.0,142.5 927.5,144.1 930.8,146.6 933.3,147.5 935.8,151.6 934.9,156.6M1146.7,220.7 1153.3,220.8 1152.5,225.0 1146.7,225.8 1145.8,230.8 1143.3,231.7 1142.5,236.7 1136.2,237.1M1153.3,220.8 1154.2,222.5 1158.7,228.3 1159.2,250.8 1145.8,252.1 1144.2,249.1 1141.7,248.7 1137.5,249.1M1166.7,207.5 1163.3,212.5 1157.5,216.7 1154.2,217.9 1154.2,222.5 1178.3,242.9 1195.0,232.1 1190.8,226.7 1190.0,215.0 1192.0,210.8M1187.5,200.0 1187.5,205.0 1190.0,211.7 1192.0,210.8M1195.0,232.1 1201.6,233.3 1203.3,232.1 1221.6,240.8 1222.0,234.6M1178.3,242.9 1180.0,243.3 1180.0,250.0 1171.6,253.3 1180.0,257.5 1182.5,255.4 1188.3,258.3 1195.0,256.6 1199.1,256.6 1203.3,246.6 1204.1,239.1 1203.3,232.9M1221.6,240.8 1221.2,250.0 1218.3,253.3 1217.5,258.3 1220.0,263.3 1221.6,268.0M1171.6,253.3 1170.0,252.1 1163.3,255.0 1159.2,258.3 1158.7,263.3 1155.0,268.0M1145.8,252.1 1146.7,257.5 1150.8,260.0 1152.5,263.3 1153.3,268.0M1137.5,255.0 1142.5,257.5 1146.7,257.5M1171.6,253.3 1173.3,258.3 1177.5,260.0 1178.3,268.0M1199.1,256.6 1201.6,260.0 1203.3,265.0 1202.5,268.0M1249.9,247.5 1248.3,253.3 1244.9,260.0 1242.4,265.0 1241.6,268.0M1221.6,265.0 1225.8,264.1 1229.9,265.0 1236.6,263.3 1240.8,260.0 1241.6,265.0M1249.9,247.5 1254.9,253.3 1259.9,258.3 1266.0,264.1M1211.6,277.9 1216.6,280.0 1222.5,277.9 1228.3,277.1 1233.3,279.6 1236.6,280.4 1237.5,285.0 1235.0,288.3 1233.3,293.3 1233.7,299.1 1234.1,305.0 1235.8,309.1 1236.6,310.0 1232.5,311.2 1231.2,314.1 1232.0,320.0 1233.3,321.6 1228.3,318.7 1221.6,317.5 1219.1,314.1 1216.6,308.3 1213.3,307.9 1211.6,309.1 1208.3,309.1 1205.8,304.6 1198.3,304.6M1211.6,277.9 1210.0,281.6 1208.3,287.5 1206.6,292.5 1205.0,296.6 1203.3,300.0 1198.3,301.6M1191.6,285.0 1200.0,284.6 1200.8,288.3 1202.5,293.3 1200.0,295.8 1195.8,296.6M1219.1,262.5 1213.3,266.7 1208.3,268.3 1203.3,270.8 1203.3,275.8 1205.8,280.0 1211.6,277.9M1189.1,277.9 1190.8,274.2 1194.1,271.7 1196.6,267.5 1200.0,263.3 1202.0,260.0M1202.0,260.0 1200.8,265.0 1203.3,270.8M1242.5,260.0 1241.6,265.0 1243.3,269.2 1240.8,270.8 1244.1,272.5 1246.2,277.3M1219.1,262.5 1223.3,268.3 1228.3,275.8 1233.3,279.6M1236.6,280.4 1244.1,280.0M1234.1,292.9 1244.1,292.1M1258.7,280.4 1266.6,275.0 1273.3,270.4 1262.4,263.8 1259.1,261.2M1236.6,310.0 1240.8,313.3 1244.1,314.1 1244.1,318.7 1249.9,317.9 1256.6,316.6M1221.6,317.5 1221.6,321.6 1217.5,322.1 1217.5,328.0M1165.0,260.0 1164.6,276.7M1171.7,260.0 1171.8,275.8M1173.7,260.0 1174.2,275.0M1177.5,260.0 1176.7,274.2M1153.3,260.0 1155.0,266.7 1151.7,272.5 1153.3,276.2M1244.1,318.7 1242.5,323.3 1244.1,328.0M1196.2,333.0 1203.3,332.6 1210.0,333.4 1216.6,334.7 1220.0,334.2 1224.1,334.7 1226.6,338.8 1230.0,343.0 1234.1,345.9M1215.4,334.7 1215.0,343.8 1212.9,344.6 1212.5,356.3M1224.1,334.7 1228.3,333.0 1233.3,328.8 1236.6,326.3 1240.0,325.5 1240.8,330.5 1240.8,335.5 1239.1,340.5 1236.6,345.5M1217.5,318.0 1217.9,326.3 1219.1,333.8M1223.3,318.0 1228.3,319.7 1233.3,322.2 1235.0,319.7 1240.8,318.0M1240.0,325.5 1242.5,323.0 1244.1,327.2 1245.8,331.3 1244.1,332.2 1243.3,328.0M1237.0,350.9 1237.9,353.4M1192.0,145.0 1192.9,142.5 1192.0,139.2 1192.5,135.8 1194.1,134.2 1195.8,130.0 1198.3,126.7 1201.6,125.0 1205.8,124.2 1210.0,124.6 1210.4,127.9M1210.0,124.6 1212.5,123.3 1215.0,122.1 1217.5,122.5 1218.7,125.8 1220.0,129.2 1222.0,133.3 1225.0,136.7 1222.5,139.2 1220.0,141.2M1220.0,144.2 1220.0,146.7 1218.7,147.9 1214.1,147.9M1218.7,147.9 1220.8,151.2 1217.5,151.6 1213.3,150.8 1210.0,151.6M1220.8,151.2 1218.7,154.1 1216.6,156.2 1213.3,156.2 1210.4,154.6M1216.6,156.2 1215.0,159.1 1214.5,160.8 1215.8,164.1 1218.3,162.1 1222.5,162.5 1226.6,163.3 1228.3,162.1 1231.6,160.8 1230.8,159.1 1228.3,156.6 1225.8,153.3 1222.0,152.5 1220.8,151.2M1198.3,157.5 1197.9,160.0 1198.3,163.3 1197.5,165.0 1194.1,167.5 1195.0,169.1 1196.6,170.8M1186.6,154.6 1189.1,154.6M1184.1,158.7 1183.3,161.6 1182.9,165.0 1184.1,167.5 1185.4,169.1M1175.0,165.4 1177.5,166.6 1180.8,168.3 1183.3,169.1 1185.4,169.1M1180.0,162.1 1181.6,163.3 1182.9,165.0M1197.5,165.0 1201.6,166.6 1205.8,168.3 1209.1,167.9 1213.7,167.5 1215.8,164.1M1231.6,160.8 1234.1,161.6 1235.8,164.1 1239.9,165.8 1244.9,166.6 1246.2,169.1 1245.8,171.6 1243.3,173.3 1244.1,175.8M1156.7,156.2 1159.6,156.6 1158.7,158.3M1176.0,164.4 1179.1,165.6 1182.2,166.9 1185.4,170.0 1186.0,171.9 1184.1,173.4 1182.2,174.7 1184.1,177.5M1193.5,166.2 1196.6,165.0 1201.0,165.6 1203.5,166.9 1205.4,167.8 1202.9,168.7 1199.7,168.4 1196.0,169.4 1194.1,167.5 1193.5,166.2M1186.0,171.9 1191.0,172.5 1194.7,170.6 1196.0,169.4M1202.9,169.1 1203.5,170.9 1202.9,173.4 1201.0,173.7 1197.2,174.1 1194.7,174.7 1191.0,173.4 1188.5,174.1 1186.0,172.5M1182.2,174.7 1184.1,173.4 1187.9,173.4 1190.0,174.7 1187.9,176.2 1184.1,176.9 1182.2,174.7M1184.1,177.5 1187.9,176.2 1190.0,174.7 1194.7,174.7 1195.4,177.5M1194.7,174.7 1197.2,174.1 1202.2,174.7 1203.5,176.2 1206.6,177.2M1203.5,172.5 1208.5,171.6 1212.8,171.2 1213.5,172.2 1211.0,174.7 1207.2,175.3 1203.8,174.7 1202.9,173.4M1213.5,167.8 1214.1,164.4 1216.6,163.1M1212.8,172.2 1216.6,171.6 1221.0,171.2 1222.8,172.2 1224.7,175.0 1226.6,176.2M1211.0,175.0 1211.6,174.1 1212.8,172.2M1221.9,170.3 1224.1,170.9 1226.6,173.4 1227.8,175.0M1221.9,170.3 1222.5,171.6 1223.8,172.8 1225.3,174.7 1226.6,176.2M1207.2,175.6 1208.5,180.6 1211.0,183.7 1213.5,187.5M1208.5,180.6 1213.5,180.0M1211.0,183.7 1216.0,183.1 1215.0,186.2M1203.5,181.7 1206.0,180.6 1208.5,180.6M1222.5,187.5 1224.1,188.4M1154.2,186.7 1155.8,189.1 1155.4,193.3 1156.7,197.9M1168.3,182.5 1171.7,184.2 1175.8,186.2M1391.6,169.1 1393.2,159.1 1397.4,157.5 1395.0,157.9 1399.2,158.3 1403.3,160.8 1406.7,164.2 1410.8,167.5 1415.8,170.0 1420.0,172.5 1423.3,171.2 1425.8,171.7 1426.7,175.8 1424.2,178.7 1425.0,181.7 1425.4,183.3M1335.8,169.6 1343.3,168.3 1353.3,161.3M1361.6,219.2 1366.6,216.7 1370.8,219.2 1373.3,220.8M1354.1,223.3 1355.8,227.5 1354.1,230.8 1356.6,232.5M1361.6,223.3 1363.3,227.5 1361.6,234.1M1355.8,227.5 1361.6,225.8M1383.9,234.3 1389.3,232.7 1393.5,234.3M1385.2,275.6 1388.1,275.1M1405.1,287.9 1409.3,287.1 1413.5,286.2 1416.8,282.5 1419.3,279.2 1421.4,278.3M1272.8,175.7 1278.7,179.3 1280.1,184.5 1284.5,185.2 1288.9,181.5 1293.3,181.5 1299.2,186.7 1305.1,188.9 1309.5,186.7M1279.4,196.9 1284.5,194.0 1290.4,195.5 1294.8,199.9 1293.3,205.7 1296.3,213.1 1299.9,220.4 1299.2,226.3M1294.8,199.9 1302.1,198.4 1310.9,194.0 1316.8,192.5M1296.3,213.1 1303.6,214.5 1309.5,208.7 1313.9,202.8 1319.7,196.9M1284.5,185.2 1290.4,189.6 1296.3,194.0 1302.1,198.4M1305.1,188.9 1308.0,192.5 1313.9,194.0 1317.5,192.5M1258.7,196.2 1262.5,202.8 1266.9,208.7 1269.1,215.3M1243.5,208.7 1249.3,205.7 1255.2,201.3 1258.7,196.2M1243.5,211.6 1252.3,208.7 1262.5,214.5 1267.2,215.7M1249.3,205.7 1250.1,198.4M1262.5,252.7 1271.3,249.7 1281.6,245.3 1288.9,238.0 1287.5,232.1M1288.9,238.0 1293.3,235.1M1255.9,185.2 1259.6,190.3 1264.0,189.6M1257.4,189.6 1262.5,192.5 1268.4,194.0M1320.8,204.2 1317.5,210.0 1313.3,215.0 1308.3,216.7 1303.3,221.7 1300.0,227.5M1027.4,286.6 1023.2,286.6 1021.6,289.9 1022.4,293.3 1020.8,296.6 1016.6,295.8 1013.3,292.4 1010.8,290.8M1020.8,296.6 1019.1,299.9 1015.8,302.4 1014.1,306.6 1014.9,310.8 1018.2,313.3 1019.9,315.8 1024.1,316.6M1042.4,279.9 1041.6,273.3 1044.9,270.8M1049.9,286.3 1050.7,276.6M1055.7,285.8 1056.6,276.6M1029.7,346.7 1037.7,344.5 1040.7,339.3 1049.8,337.1M1037.7,344.5 1042.1,348.1 1050.9,354.0 1053.9,357.7 1059.7,356.9M1054.6,365.0 1053.9,370.1 1054.6,374.5M980.0,247.5 981.6,251.6 986.6,253.3 993.3,255.8M983.3,256.1 988.3,257.5 992.4,260.8M989.1,263.6 993.3,264.1" fill="none" stroke="#f1f1f1" stroke-width="0.85" stroke-linejoin="round"/>
</svg>

<!-- expand icon -->
<svg class="a" style="left:1282px;top:402px" width="22" height="22" viewBox="0 0 22 22"><path d="M3 8.4 V3 H8.4 M3.4 3.4 L9.6 9.6 M19.6 13.6 V19 H14.2 M19.2 18.6 L12.6 12" fill="none" stroke="#1675a6" stroke-width="1.9"/></svg>

<!-- panel -->
<div id="panel"></div>
<div class="a" style="left:84px;top:483px;width:736px;height:44px;background:#f1f1f1;border:2px solid #b4b4b4;border-radius:7px"></div>
<svg class="a" style="left:788px;top:492px" width="24" height="24" viewBox="0 0 24 24"><circle cx="13.6" cy="10.6" r="5.3" fill="none" stroke="#111" stroke-width="1.9"/><path d="M9.8 14.6 L5.4 19.2" stroke="#111" stroke-width="2.2" stroke-linecap="round"/></svg>

<!-- download icons -->
<svg class="a" style="left:992px;top:502px" width="18" height="20" viewBox="0 0 18 20"><path d="M9 2 V15.2 M2.9 9.8 L9 15.6 L15.1 9.8 M2 17.5 H16" fill="none" stroke="#1675a6" stroke-width="1.85"/></svg>
<svg class="a" style="left:1280px;top:502px" width="18" height="20" viewBox="0 0 18 20"><path d="M9 2 V15.2 M2.9 9.8 L9 15.6 L15.1 9.8 M2 17.5 H16" fill="none" stroke="#1675a6" stroke-width="1.85"/></svg>
<div class="ul" style="left:1016px;top:523px;width:246.5px"></div>
<div class="ul" style="left:1304px;top:523px;width:252px"></div>

<!-- table header chevrons -->
<svg class="a" style="left:246.7px;top:576.3px" width="20" height="12" viewBox="0 0 20 12"><path d="M2.2 2.8 L10 9 L17.8 2.8" fill="none" stroke="#111" stroke-width="1.9"/></svg>
<svg class="a" style="left:757px;top:576.3px" width="20" height="12" viewBox="0 0 20 12"><path d="M2.2 2.8 L10 9 L17.8 2.8" fill="none" stroke="#111" stroke-width="1.9"/></svg>
<svg class="a" style="left:907.4px;top:576.3px" width="20" height="12" viewBox="0 0 20 12"><path d="M2.2 2.8 L10 9 L17.8 2.8" fill="none" stroke="#111" stroke-width="1.9"/></svg>
<svg class="a" style="left:1261.2px;top:576.3px" width="20" height="12" viewBox="0 0 20 12"><path d="M2.2 2.8 L10 9 L17.8 2.8" fill="none" stroke="#111" stroke-width="1.9"/></svg>
<svg class="a" style="left:1423.4px;top:576.3px" width="20" height="12" viewBox="0 0 20 12"><path d="M2.2 2.8 L10 9 L17.8 2.8" fill="none" stroke="#111" stroke-width="1.9"/></svg>
<div class="a" style="left:84px;top:605px;width:1472px;height:2px;background:#02163d"></div>
<div class="rl" style="top:651.3px"></div>
<div class="rl" style="top:697.4px"></div>
<div class="rl" style="top:743.5px"></div>
<div class="rl" style="top:789.6px"></div>

<div class="m" id="t_back" style="left:77.73px;top:36.19px;font-size:17.5px;color:#02163d;transform:scaleX(1.0821)">All investments</div>
<div class="m" id="t_usd" style="left:1480.58px;top:37.09px;font-size:17.5px;color:#02163d;transform:scaleX(0.9918)">USD</div>
<div class="m" id="t_norsk" style="left:1537.51px;top:37.09px;font-size:17.5px;color:#02163d;transform:scaleX(1.0865)">Norsk</div>
<div class="m" id="t_year" style="left:69.68px;top:107.19px;font-size:17.5px;font-weight:bold;color:#1675a6;transform:scaleX(0.9970)">Year (as at 31.12)</div>
<div class="m" id="t_2024" style="left:68.51px;top:135.39px;font-size:17.5px;color:#02163d;transform:scaleX(1.0918)">2024</div>
<div class="m" id="t_invin" style="left:326.60px;top:107.19px;font-size:17.5px;font-weight:bold;color:#1675a6;transform:scaleX(1.0574)">Investments in</div>
<div class="m" id="t_7reg" style="left:327.62px;top:135.39px;font-size:17.5px;color:#02163d;transform:scaleX(1.0835)">7 regions, 63 countries</div>
<div class="m" id="t_sector" style="left:635.73px;top:107.19px;font-size:17.5px;font-weight:bold;color:#1675a6;transform:scaleX(1.0813)">Sector</div>
<div class="m" id="t_all" style="left:635.57px;top:135.39px;font-size:17.5px;color:#02163d;transform:scaleX(1.0958)">All</div>
<div class="m" id="t_eq" style="left:50.69px;top:223.44px;font-size:17.5px;font-weight:bold;color:#02163d;transform:scaleX(1.0417)">Equities</div>
<div class="m" id="t_big" style="left:51.55px;top:245.28px;font-size:36px;font-weight:bold;color:#02163d;transform:scaleX(1.0670)">14,112,924,028,100</div>
<div class="m" id="t_nok" style="left:396.62px;top:260.78px;font-size:16.5px;font-weight:bold;color:#02163d;transform:scaleX(1.0931)">NOK</div>
<div class="m" id="t_s1" style="left:50.71px;top:293.67px;font-size:19px;color:#02163d;transform:scaleX(1.1178)">63 countries</div>
<div class="m" id="t_s2" style="left:181.64px;top:293.67px;font-size:19px;color:#02163d;transform:scaleX(1.0860)">8,659 investments</div>
<div class="m" id="t_s3" style="left:363.57px;top:293.67px;font-size:19px;color:#02163d;transform:scaleX(1.0587)">71.4 % of all investments</div>
<div class="m" id="t_show" style="left:1102.65px;top:404.56px;font-size:18px;color:#3a3a3a;transform:scaleX(1.0519)">Show list of countries</div>
<div class="m" id="t_search" style="left:96.64px;top:497.03px;font-size:16.5px;color:#666;transform:scaleX(1.0350)">Search for company</div>
<div class="m" id="t_dl1" style="left:1014.57px;top:505.19px;font-size:17.5px;color:#02163d;transform:scaleX(1.0820)">Download your selection (.xls)</div>
<div class="m" id="t_dl2" style="left:1302.58px;top:505.19px;font-size:17.5px;color:#02163d;transform:scaleX(1.0863)">Download your selection (.csv)</div>
<div class="m" id="h_comp" style="left:83.65px;top:574.94px;font-size:17.5px;color:#02163d;transform:scaleX(1.0646)">Companies (8,659)</div>
<div class="m" id="h_val" style="left:660.57px;top:574.94px;font-size:17.5px;color:#02163d;transform:scaleX(1.0451)">Value NOK</div>
<div class="m" id="h_sec" style="left:808.74px;top:574.94px;font-size:17.5px;color:#02163d;transform:scaleX(0.9969)">Sectors (11)</div>
<div class="m" id="h_own" style="left:1162.72px;top:574.94px;font-size:17.5px;color:#02163d;transform:scaleX(1.0878)">Ownership</div>
<div class="m" id="h_cty" style="left:1312.56px;top:574.94px;font-size:17.5px;color:#02163d;transform:scaleX(1.0824)">Country (63)</div>
<div class="m" id="c0" style="left:84.56px;top:621.94px;font-size:17.5px;color:#1675a6;transform:scaleX(1.0556)">A O Smith Corp</div>
<div class="m" id="v0" style="left:647.69px;top:621.94px;font-size:17.5px;color:#02163d;transform:scaleX(1.1445)">1,092,347,462</div>
<div class="m" id="s0" style="left:808.67px;top:621.94px;font-size:17.5px;color:#02163d;transform:scaleX(1.0660)">Industrials</div>
<div class="m" id="o0" style="left:1225.66px;top:621.94px;font-size:17.5px;color:#02163d;transform:scaleX(1.1121)">0.97%</div>
<div class="m" id="y0" style="left:1312.57px;top:621.94px;font-size:17.5px;color:#02163d;transform:scaleX(1.0640)">United States</div>
<div class="m" id="c1" style="left:84.59px;top:668.04px;font-size:17.5px;color:#1675a6;transform:scaleX(1.0496)">A&amp;D HOLON Holdings Co Ltd</div>
<div class="m" id="v1" style="left:675.55px;top:668.04px;font-size:17.5px;color:#02163d;transform:scaleX(1.1475)">47,203,923</div>
<div class="m" id="s1" style="left:808.67px;top:668.04px;font-size:17.5px;color:#02163d;transform:scaleX(1.0660)">Industrials</div>
<div class="m" id="o1" style="left:1225.55px;top:668.04px;font-size:17.5px;color:#02163d;transform:scaleX(1.1188)">1.18%</div>
<div class="m" id="y1" style="left:1313.70px;top:668.04px;font-size:17.5px;color:#02163d;transform:scaleX(1.0873)">Japan</div>
<div class="m" id="c2" style="left:84.66px;top:714.14px;font-size:17.5px;color:#1675a6;transform:scaleX(1.0607)">A-Living Smart City Services Co Ltd</div>
<div class="m" id="v2" style="left:713.73px;top:714.14px;font-size:17.5px;color:#02163d;transform:scaleX(1.1605)">12,709</div>
<div class="m" id="s2" style="left:808.54px;top:714.14px;font-size:17.5px;color:#02163d;transform:scaleX(1.0267)">Real Estate</div>
<div class="m" id="o2" style="left:1225.66px;top:714.14px;font-size:17.5px;color:#02163d;transform:scaleX(1.1121)">0.00%</div>
<div class="m" id="y2" style="left:1313.50px;top:714.14px;font-size:17.5px;color:#02163d;transform:scaleX(1.0400)">China</div>
<div class="m" id="c3" style="left:84.67px;top:760.24px;font-size:17.5px;color:#1675a6;transform:scaleX(1.0366)">A10 Networks Inc</div>
<div class="m" id="v3" style="left:674.71px;top:760.24px;font-size:17.5px;color:#02163d;transform:scaleX(1.1568)">81,800,014</div>
<div class="m" id="s3" style="left:809.63px;top:760.24px;font-size:17.5px;color:#02163d;transform:scaleX(1.0759)">Technology</div>
<div class="m" id="o3" style="left:1225.66px;top:760.24px;font-size:17.5px;color:#02163d;transform:scaleX(1.1121)">0.53%</div>
<div class="m" id="y3" style="left:1312.57px;top:760.24px;font-size:17.5px;color:#02163d;transform:scaleX(1.0640)">United States</div>
<div class="m" id="c4" style="left:84.65px;top:806.34px;font-size:17.5px;color:#1675a6;transform:scaleX(0.9943)">A2A SpA</div>
<div class="m" id="v4" style="left:663.53px;top:806.34px;font-size:17.5px;color:#02163d;transform:scaleX(1.1591)">868,893,408</div>
<div class="m" id="s4" style="left:808.63px;top:806.34px;font-size:17.5px;color:#02163d;transform:scaleX(1.0600)">Utilities</div>
<div class="m" id="o4" style="left:1225.55px;top:806.34px;font-size:17.5px;color:#02163d;transform:scaleX(1.1188)">1.10%</div>
<div class="m" id="y4" style="left:1312.72px;top:806.34px;font-size:17.5px;color:#02163d;transform:scaleX(1.0479)">Italy</div>

<div id="redge"></div><div id="bedge"></div>
</body></html>
